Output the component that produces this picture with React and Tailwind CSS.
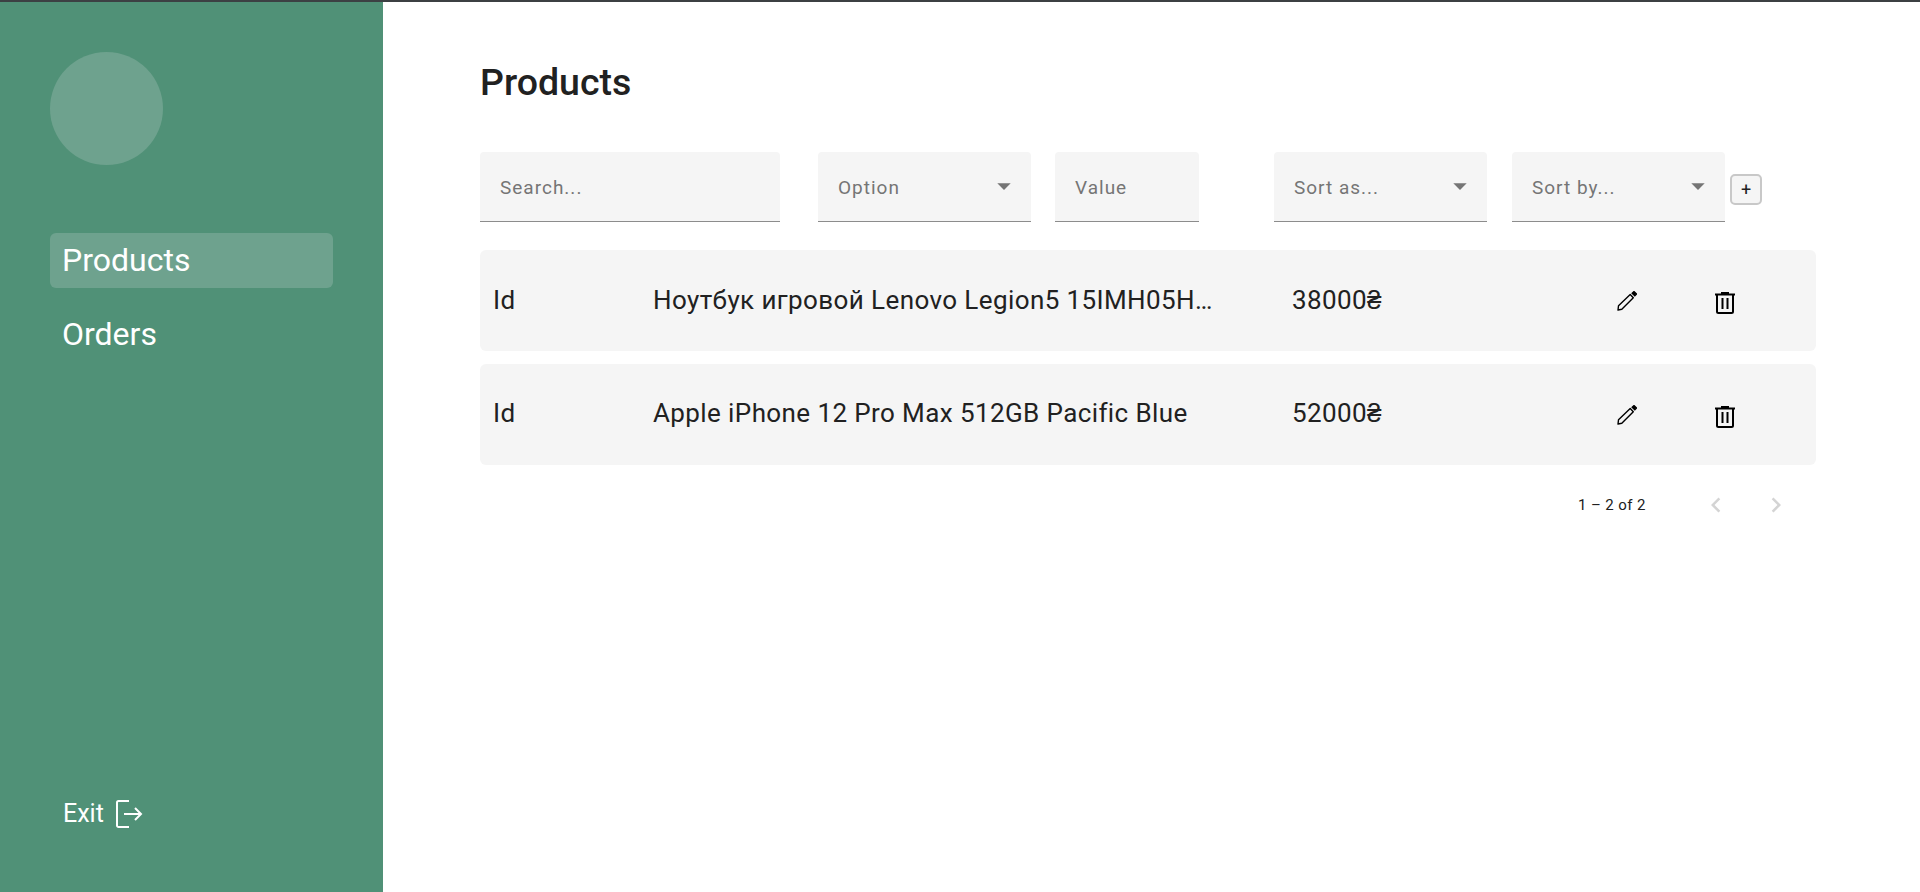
import React from "react";

function Caret() {
  return (
    <svg width="32" height="32" viewBox="0 0 24 24" className="absolute right-[11px] top-[18px]" fill="#757575">
      <path d="M7 10l5 5 5-5z" />
    </svg>
  );
}

function Field({ label, className, select }) {
  return (
    <div className={`relative h-[70px] rounded-t-[4px] bg-[#f5f5f5] border-b border-[#8c8c8c] pl-5 pt-[24px] text-[19px] leading-[24px] tracking-[1px] text-[#757575] shrink-0 ${className}`}>
      {label}
      {select && <Caret />}
    </div>
  );
}

function Pencil() {
  return (
    <svg width="20" height="20" viewBox="0 0 20 20" fill="none" stroke="#000" strokeWidth="1.4">
      <path d="M1.500 14.800 13.200 3.600 16.300 6.700 4.800 18.300 1 19z" strokeLinejoin="round" />
      <path d="M15.200 2.300 17 .6 19.500 3.100 17.800 4.800z" fill="#000" />
    </svg>
  );
}

function Trash() {
  return (
    <svg width="20" height="22" viewBox="0 0 20 22" fill="none" stroke="#000" strokeWidth="2">
      <path d="M0 2.500H20" />
      <path d="M6 1H14" />
      <path d="M2 3V19.500A1.500 1.500 0 0 0 3.500 21H16.500A1.500 1.500 0 0 0 18 19.500V3" />
      <path d="M7.500 6V17M12.500 6V17" />
    </svg>
  );
}

function Row({ name, price, textClass }) {
  return (
    <div className="flex items-center h-[101px] rounded-[6px] bg-[#f5f5f5] text-[26px] leading-[32px] tracking-[0.4px] text-[#212121]">
      <div className={`w-[173px] pl-[13px] shrink-0 ${textClass}`}>Id</div>
      <div className={`w-[639px] shrink-0 ${textClass}`}>{name}</div>
      <div className={`w-[325px] shrink-0 ${textClass}`}>{price}</div>
      <div className="w-[98px] shrink-0 flex"><Pencil /></div>
      <div className="shrink-0 flex pt-[5px]"><Trash /></div>
    </div>
  );
}

export default function App() {
  return (
    <div className="h-[892px] overflow-hidden bg-white font-['Roboto',sans-serif]">
      <div className="h-[2px] bg-[#3c4043]" />
      <div className="flex h-[890px]">
        <aside className="w-[383px] shrink-0 bg-[#509177] px-[50px] pt-[50px] pb-[62px] flex flex-col text-white">
          <div className="w-[113px] h-[113px] rounded-full bg-[#6ea28e]" />
          <nav className="mt-[68px] w-[283px] flex flex-col gap-[19px]">
            <div className="h-[55px] rounded-[6px] bg-[#6ea28e] pl-[12px] text-[32px] leading-[54px]">Products</div>
            <div className="h-[55px] pl-[12px] text-[32px] leading-[55px]">Orders</div>
          </nav>
          <div className="mt-auto flex items-center pl-[13px] text-[25px] leading-[32px]">
            <span>Exit</span>
            <svg width="30" height="30" viewBox="0 0 30 30" fill="none" stroke="#fff" strokeWidth="2" className="ml-[9px]">
              <path d="M16 2H5.500A1.500 1.500 0 0 0 4 3.500V26.500A1.500 1.500 0 0 0 5.500 28H16" />
              <path d="M11 15H28M22 9l6 6-6 6" />
            </svg>
          </div>
        </aside>
        <main className="flex-1 pl-[97px] pt-[56px] pr-[104px]">
          <h1 className="text-[37.500px] leading-[48px] font-medium text-[#212121]">Products</h1>
          <div className="mt-[46px] flex items-center">
            <Field label="Search..." className="w-[300px]" />
            <Field label="Option" select className="w-[213px] ml-[38px]" />
            <Field label="Value" className="w-[144px] ml-[24px]" />
            <Field label="Sort as..." select className="w-[213px] ml-[75px]" />
            <Field label="Sort by..." select className="w-[213px] ml-[25px]" />
            <button className="ml-[5px] mt-[5px] w-[32px] h-[31px] rounded-[5px] border-2 border-[#c8c8c8] bg-[#f5f5f5] text-[18px] leading-none text-[#212121] flex items-center justify-center">+</button>
          </div>
          <div className="mt-[28px] flex flex-col gap-[13px]">
            <Row name="Ноутбук игровой Lenovo Legion5 15IMH05H…" price="38000₴" textClass="pb-[1px]" />
            <Row name="Apple iPhone 12 Pro Max 512GB Pacific Blue" price="52000₴" textClass="pb-[3px]" />
          </div>
          <div className="mt-[28px] flex items-center h-[24px] pl-[1098px] text-[15px] leading-[24px] tracking-[0.4px] text-[#212121]">
            <span>1 – 2 of 2</span>
            <svg width="30" height="30" viewBox="0 0 24 24" fill="#d4d4d4" className="ml-[55px] shrink-0"><path d="M15.410 7.410 14 6l-6 6 6 6 1.410-1.410L10.830 12z" /></svg>
            <svg width="30" height="30" viewBox="0 0 24 24" fill="#d4d4d4" className="ml-[30px] shrink-0"><path d="M10 6 8.590 7.410 13.170 12l-4.580 4.590L10 18l6-6z" /></svg>
          </div>
        </main>
      </div>
    </div>
  );
}
